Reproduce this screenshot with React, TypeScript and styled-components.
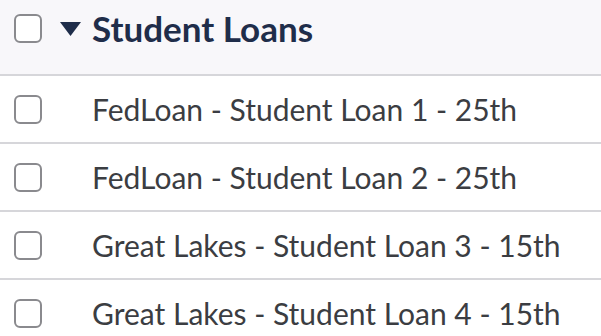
import styled, { createGlobalStyle } from 'styled-components';

const loans = [
  'FedLoan - Student Loan 1 - 25th',
  'FedLoan - Student Loan 2 - 25th',
  'Great Lakes - Student Loan 3 - 15th',
  'Great Lakes - Student Loan 4 - 15th',
];

const GlobalStyle = createGlobalStyle`
  body {
    margin: 0;
    background: #ffffff;
    font-family: Lato, 'Open Sans', sans-serif;
  }
`;

const App = () => {
  return (
    <>
      <GlobalStyle />
      <List>
        <Header>
          <HeaderLine>
            <Checkbox />
            <Caret viewBox="0 0 21 14">
              <path d="M0 0 H21 L10.5 14 Z" fill="#1f2d4a" />
            </Caret>
            <Title>Student Loans</Title>
          </HeaderLine>
        </Header>
        {loans.map((name) => (
          <Row key={name}>
            <Checkbox />
            <Label>{name}</Label>
          </Row>
        ))}
      </List>
    </>
  );
};

const List = styled.div`
  display: flex;
  flex-direction: column;
  width: 601px;
`;

const Header = styled.div`
  box-sizing: border-box;
  height: 76px;
  padding: 14px 14px 0;
  background: #f8f7fa;
  border-bottom: 2px solid #d6d6da;
`;

const HeaderLine = styled.div`
  display: flex;
  align-items: center;
  height: 29px;
`;

const Row = styled.div`
  display: flex;
  align-items: center;
  height: 66px;
  padding: 0 14px;
  border-bottom: 2px solid #d6d6da;
`;

const Checkbox = styled.span`
  box-sizing: border-box;
  width: 28px;
  height: 29px;
  flex-shrink: 0;
  border: 2px solid #8a8a8e;
  border-radius: 6px;
  background: #ffffff;
`;

const Caret = styled.svg`
  width: 21px;
  height: 14px;
  margin-left: 18px;
  flex-shrink: 0;
`;

const Title = styled.span`
  margin-left: 11px;
  font-size: 35px;
  font-weight: 700;
  line-height: 1;
  color: #1f2d4a;
`;

const Label = styled.span`
  margin-left: 50px;
  font-size: 30px;
  color: #3b3d42;
`;

export default App;
